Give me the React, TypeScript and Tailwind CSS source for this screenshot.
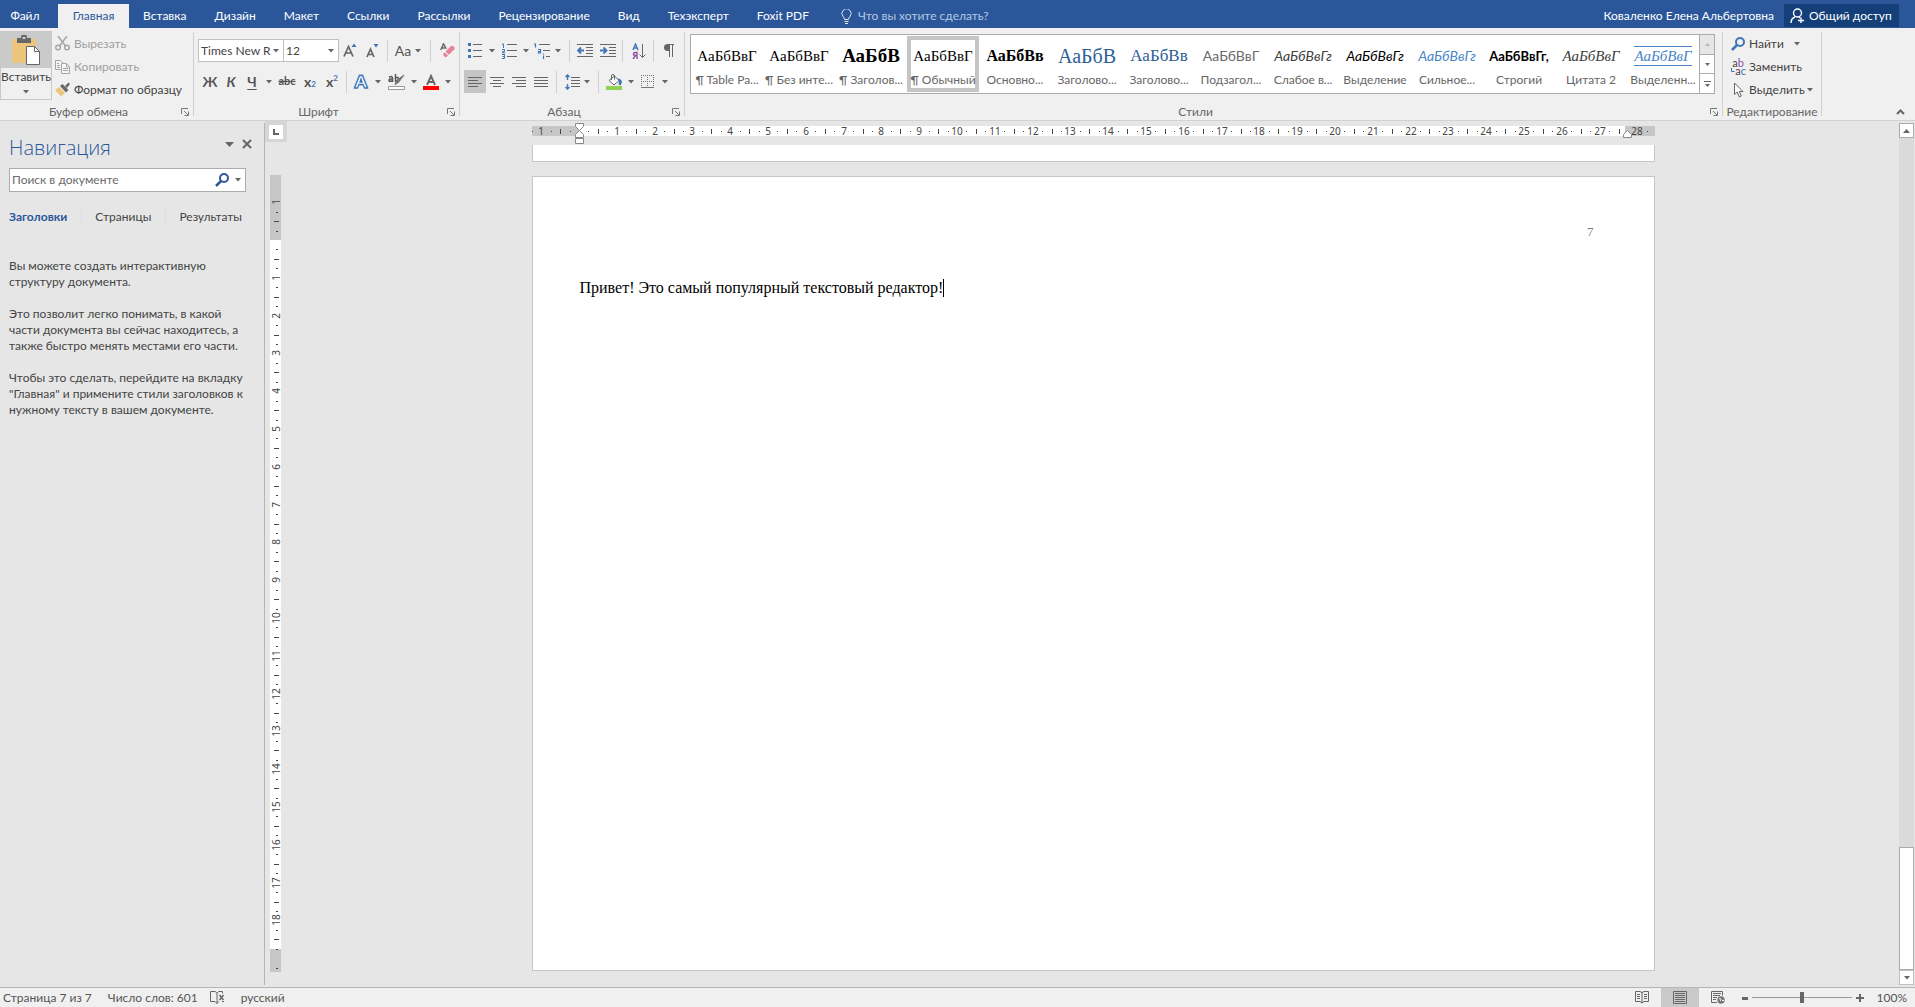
import { useState } from "react";
import type { ReactNode } from "react";
import clsx from "clsx";

const tabs = ["Вставка", "Дизайн", "Макет", "Ссылки", "Рассылки", "Рецензирование", "Вид", "Техэксперт", "Foxit PDF"];

const styles = [
    { preview: "АаБбВвГ", label: "¶ Table Pa...", look: "font-['Liberation_Serif',serif] text-[15px] text-black" },
    { preview: "АаБбВвГ", label: "¶ Без инте...", look: "font-['Liberation_Serif',serif] text-[15px] text-black" },
    { preview: "АаБбВ", label: "¶ Заголов...", look: "font-['Liberation_Serif',serif] text-[19px] font-bold text-black" },
    { preview: "АаБбВвГ", label: "¶ Обычный", look: "font-['Liberation_Serif',serif] text-[15px] text-black" },
    { preview: "АаБбВв", label: "Основно...", look: "font-['Liberation_Serif',serif] text-[16px] font-bold text-black" },
    { preview: "АаБбВ", label: "Заголово...", look: "font-['Liberation_Serif',serif] text-[20px] text-[#2e6096]" },
    { preview: "АаБбВв", label: "Заголово...", look: "font-['Liberation_Serif',serif] text-[17px] text-[#2e6096]" },
    { preview: "АаБбВвГ", label: "Подзагол...", look: "text-[14px] text-[#6a6a6a]" },
    { preview: "АаБбВвГг", label: "Слабое в...", look: "text-[14px] italic text-[#404040]" },
    { preview: "АаБбВвГг", label: "Выделение", look: "text-[14px] italic text-black" },
    { preview: "АаБбВвГг", label: "Сильное...", look: "text-[14px] italic text-[#4a86c8]" },
    { preview: "АаБбВвГг,", label: "Строгий", look: "text-[13px] font-bold text-black" },
    { preview: "АаБбВвГ", label: "Цитата 2", look: "font-['Liberation_Serif',serif] text-[15px] italic text-[#404040]" },
    { preview: "АаБбВвГ", label: "Выделенн...", look: "font-['Liberation_Serif',serif] text-[15px] italic text-[#4a86c8] border-y border-[#4a86c8]" },
];

const Arrow = () => (
    <svg className="shrink-0" width="6" height="4" viewBox="0 0 6 4">
        <path d="M0 0h6L3 3.500z" fill="#666" />
    </svg>
);

const Sep = ({ className = "mx-[2px]" }: { className?: string }) => (
    <span className={clsx("h-[22px] w-px shrink-0 bg-[#d0d0d0]", className)} />
);

const Tool = ({ label, className, children }: { label: string; className: string; children: ReactNode }) => (
    <button type="button" aria-label={label} className={clsx("flex h-[23px] shrink-0 items-center justify-center", className)}>
        {children}
    </button>
);

const Launcher = () => (
    <button type="button" aria-label="Параметры" className="absolute right-1 bottom-1">
        <svg width="8" height="8" viewBox="0 0 8 8" fill="none" stroke="#777">
            <path d="M.5 6V.5H7M3 3l4 4M7.500 3.500V7.500H3.500" />
        </svg>
    </button>
);

const Group = ({ title, launcher, children, className }: { title: string; launcher?: boolean; children: ReactNode; className?: string }) => (
    <>
        <section aria-label={title} className="relative flex shrink-0 flex-col pt-1">
            <div className={clsx("flex-1", className)}>{children}</div>
            <div className={clsx("text-center leading-4 text-[#666]", launcher && "pr-4")}>{title}</div>
            {launcher && <Launcher />}
        </section>
        <span className="my-1 w-px shrink-0 bg-[#d0d0d0]" />
    </>
);

const Lines = ({ rows }: { rows: [number, number][] }) => (
    <svg width="14" height="10" viewBox="0 0 14 10" stroke="#666">
        {rows.map(([from, to], i) => (
            <path key={i} d={`M${from} ${i * 3 + 0.5}H${to}`} />
        ))}
    </svg>
);

const Magnifier = ({ color, size }: { color: string; size: number }) => (
    <svg width={size} height={size} viewBox="0 0 14 14" fill="none" stroke={color} strokeWidth="2">
        <circle cx="9" cy="5" r="4" />
        <path d="M6 8L1 13" strokeWidth="2.500" />
    </svg>
);

const Clipboard = () => {
    return (
        <Group title="Буфер обмена" launcher className="flex">
            <button type="button" className="-mt-px flex h-[69px] w-[52px] flex-col border border-[#c8c8c8]">
                <span className="flex h-9 w-full items-center justify-center bg-[#cacaca]">
                    <svg width="30" height="30" viewBox="0 0 30 30">
                        <path d="M1 4h24v24H1z" fill="#ecc57c" />
                        <path d="M6 3h4V1.500Q10 0 11.500 0h3Q16 0 16 1.500V3h4v5H6z" fill="#666" />
                        <path d="M11.500 2h3v2h-3z" fill="#cacaca" />
                        <path d="M15.500 11.500h8l5 5v13h-13z" fill="#fff" stroke="#666" />
                        <path d="M23.500 11.500v5h5" fill="none" stroke="#666" />
                    </svg>
                </span>
                <span className="flex w-full flex-col items-center gap-1 text-[#444]">
                    <span className="leading-[18px]">Вставить</span>
                    <Arrow />
                </span>
            </button>
            <div className="flex w-[141px] flex-col pl-[3px]">
                <button type="button" className="flex h-[23px] items-center gap-1 text-[#a0a0a0]">
                    <svg width="15" height="15" viewBox="0 0 15 15" fill="none" stroke="#a6a6a6" strokeWidth="1.500">
                        <path d="M3 0l7.500 10M12 0L4.500 10" />
                        <circle cx="3" cy="11.500" r="2.300" />
                        <circle cx="12" cy="11.500" r="2.300" />
                    </svg>
                    Вырезать
                </button>
                <button type="button" className="flex h-[23px] items-center gap-1 text-[#a0a0a0]">
                    <svg width="15" height="14" viewBox="0 0 15 14" fill="#f4f4f4" stroke="#a6a6a6">
                        <path d="M.5 .5h5l3 3v6h-8z" />
                        <path d="M6.500 3.500h5l3 3v7h-8z" />
                        <path d="M2 3.500h2M2 5.500h3M2 7.500h3M8 8.500h5M8 10.500h5M11.500 4v3h3" />
                    </svg>
                    Копировать
                </button>
                <button type="button" className="flex h-[23px] items-center gap-1 text-[#444]">
                    <svg width="15" height="15" viewBox="0 0 15 15">
                        <path d="M0 8l4-3 6 6-4 3.500z" fill="#ecc57c" />
                        <path d="M5 4l2.500-2 6 6L11 10.500z" fill="#666" />
                        <path d="M10 4l3.500-3.500 1.500 1.500L12 6z" fill="#666" />
                    </svg>
                    Формат по образцу
                </button>
            </div>
        </Group>
    );
};

const Combo = ({ label, value, className }: { label: string; value: string; className: string }) => (
    <div className={clsx("relative h-[23px] shrink-0 border border-[#c0c0c0] bg-white", className)}>
        <select aria-label={label} className="block h-full w-full appearance-none overflow-hidden bg-white pr-3 pl-[2px] text-[#444] outline-none">
            <option>{value}</option>
        </select>
        <span className="pointer-events-none absolute top-1/2 right-1 -translate-y-1/2">
            <Arrow />
        </span>
    </div>
);

const FontGroup = () => (
    <Group title="Шрифт" launcher className="flex w-[265px] flex-col gap-2 pt-[7px] pl-1 text-[#555]">
        <div className="flex items-center">
            <Combo label="Шрифт" value="Times New R" className="w-[86px]" />
            <Combo label="Размер" value="12" className="-ml-px w-14" />
            <Tool label="Увеличить размер" className="w-[22px]">
                <svg width="14" height="15" viewBox="0 0 14 15">
                    <path d="M1 13.500L5.500 3.500L10 13.500M3 10h5.500" fill="none" stroke="#666" strokeWidth="1.700" />
                    <path d="M8.500 4l2.500-3.500L13.500 4z" fill="#3f74b5" />
                </svg>
            </Tool>
            <Tool label="Уменьшить размер" className="w-[22px]">
                <svg width="14" height="15" viewBox="0 0 14 15">
                    <path d="M2 14L5.500 6L9 14M3.500 11.500h4" fill="none" stroke="#666" strokeWidth="1.700" />
                    <path d="M8.500 1l2.500 3.500L13.500 1z" fill="#3f74b5" />
                </svg>
            </Tool>
            <Sep className="mr-[2px] ml-1" />
            <Tool label="Регистр" className="w-9 gap-1 text-[14px]">
                Aa <Arrow />
            </Tool>
            <Sep className="mx-1" />
            <Tool label="Очистить формат" className="w-6">
                <svg width="15" height="15" viewBox="0 0 15 15">
                    <path d="M.700 7L3.500 .7L6.300 6M1.800 5h3" fill="none" stroke="#666" strokeWidth="1.400" />
                    <path d="M5.500 8.500L11 3q1-.6 2 0l1.300 1.300q.6 1 0 2L8.800 11.800z" fill="#e8819a" />
                    <path d="M4.700 9.300l3.300 3.300-1.500 1.400H5L3.300 12.300v-1.600z" fill="#e8819a" />
                </svg>
            </Tool>
        </div>
        <div className="flex items-center text-[14px] font-bold">
            <Tool label="Полужирный" className="w-6">Ж</Tool>
            <Tool label="Курсив" className="w-[18px] italic">К</Tool>
            <Tool label="Подчеркнутый" className="w-6 underline underline-offset-2">Ч</Tool>
            <Tool label="Вид подчеркивания" className="w-[10px]"><Arrow /></Tool>
            <Tool label="Зачеркнутый" className="w-[26px] text-[11px] line-through">abc</Tool>
            <Tool label="Подстрочный" className="w-5">x<sub className="text-[8px] text-[#3f74b5]">2</sub></Tool>
            <Tool label="Надстрочный" className="w-6">x<sup className="text-[8px] text-[#3f74b5]">2</sup></Tool>
            <Sep />
            <Tool label="Текстовые эффекты" className="w-6">
                <svg width="16" height="16" viewBox="0 0 16 16" fill="none">
                    <path d="M2 14L7 2h2l5 12M5 10h6" stroke="#c5d9ef" strokeWidth="4" />
                    <path d="M1.500 14L6.500 1.500h3L14.500 14h-3L10 10.500H6L4.500 14zM7 8h2L8 5z" stroke="#3f74b5" strokeWidth="1.300" fill="#f6f9fd" />
                </svg>
            </Tool>
            <Tool label="Эффекты" className="w-[10px]"><Arrow /></Tool>
            <Tool label="Цвет выделения" className="w-[26px]">
                <svg width="17" height="17" viewBox="0 0 17 17">
                    <path d="M1 4.200Q4.500 2.700 4.500 5v4M4.500 5.800Q1 5.800 1 7.400T4.500 7.700M7.500 1v8M7.500 5q3-1.500 3 1t-3 2.300" fill="none" stroke="#555" strokeWidth="1.500" />
                    <path d="M16 2L10.500 9.500 7 11.500l1.500-4z" fill="#777" stroke="#777" />
                    <path d="M.5 13.500h16v3H.5z" fill="#fff" stroke="#999" />
                </svg>
            </Tool>
            <Tool label="Маркер" className="w-[10px]"><Arrow /></Tool>
            <Tool label="Цвет текста" className="w-6">
                <svg width="16" height="16" viewBox="0 0 16 16">
                    <path d="M4 11L8 2l4 9M5.500 8h5" fill="none" stroke="#666" strokeWidth="1.900" />
                    <path d="M0 12h16v4H0z" fill="#f00" />
                </svg>
            </Tool>
            <Tool label="Цвета" className="w-[10px]"><Arrow /></Tool>
        </div>
    </Group>
);

const ParagraphGroup = () => (
    <Group title="Абзац" launcher className="flex w-[224px] flex-col gap-2 pt-[7px] pl-1">
        <div className="flex items-center">
            <Tool label="Маркеры" className="w-[34px] gap-[7px]">
                <svg width="14" height="15" viewBox="0 0 14 15">
                    <path d="M0 0h3v3H0zM0 6h3v3H0zM0 12h3v3H0z" fill="#3f74b5" />
                    <path d="M5 1.500h9M5 7.500h9M5 13.500h9" stroke="#666" />
                </svg>
                <Arrow />
            </Tool>
            <Tool label="Нумерация" className="w-[34px] gap-[6px]">
                <svg width="15" height="16" viewBox="0 0 15 16">
                    <path d="M0 1h1.500V5M0 6.500h2.500v2H.500v1.500h2.500M0 11.500h2.500v4H0M.500 13.500h2" fill="none" stroke="#3f74b5" />
                    <path d="M5 1.500h10M5 7.500h10M5 13.500h10" stroke="#666" />
                </svg>
                <Arrow />
            </Tool>
            <Tool label="Многоуровневый список" className="w-[30px] gap-1">
                <svg width="17" height="16" viewBox="0 0 17 16">
                    <path d="M0 1h1.500V4.500M4 6.500h2.500v3.500h-2V8.500h2M9.500 10.500v1M9.500 12.500V16" fill="none" stroke="#3f74b5" strokeWidth="1.200" />
                    <path d="M5 1.500h11M9 7.500h7M12 13.500h4" stroke="#666" />
                </svg>
                <Arrow />
            </Tool>
            <Sep className="mr-[3px] ml-[7px]" />
            <Tool label="Уменьшить отступ" className="w-6">
                <svg width="16" height="13" viewBox="0 0 16 13">
                    <path d="M0 .5h16M9 3.500h7M9 6.500h7M9 9.500h7M0 12.500h16" stroke="#666" />
                    <path d="M7 6.500H1M4 3.500L1 6.500l3 3" fill="none" stroke="#3f74b5" strokeWidth="1.800" />
                </svg>
            </Tool>
            <Tool label="Увеличить отступ" className="w-[22px]">
                <svg width="16" height="13" viewBox="0 0 16 13">
                    <path d="M0 .5h16M9 3.500h7M9 6.500h7M9 9.500h7M0 12.500h16" stroke="#666" />
                    <path d="M0 6.500h6M3.500 3.500l3 3-3 3" fill="none" stroke="#3f74b5" strokeWidth="1.800" />
                </svg>
            </Tool>
            <Sep className="mr-[5px] ml-[3px]" />
            <Tool label="Сортировка" className="w-[22px]">
                <svg width="14" height="16" viewBox="0 0 14 16" fill="none">
                    <path d="M1 7L3.500 1L6 7M2 5h3" stroke="#3f74b5" strokeWidth="1.400" />
                    <path d="M5 16V9.500H3Q1.500 9.500 1.500 11t2 1.500H5M3.500 12.500L1 16" stroke="#8e4fa8" strokeWidth="1.400" />
                    <path d="M10.500 1v13M7.500 11.500l3 3 3-3" stroke="#666" />
                </svg>
            </Tool>
            <Sep className="mx-[3px]" />
            <Tool label="Знаки абзаца" className="w-6">
                <svg width="10" height="13" viewBox="0 0 10 13">
                    <path d="M10 .5H4M5.500 1v12M8.500 1v12" stroke="#666" />
                    <path d="M6 0H3.500a3.500 3.500 0 000 7H6z" fill="#666" />
                </svg>
            </Tool>
        </div>
        <div className="flex items-center">
            <Tool label="По левому краю" className="w-[22px] bg-[#c5c5c5]"><Lines rows={[[0, 14], [0, 10], [0, 14], [0, 10]]} /></Tool>
            <Tool label="По центру" className="w-[22px]"><Lines rows={[[0, 14], [3, 11], [0, 14], [3, 11]]} /></Tool>
            <Tool label="По правому краю" className="w-[22px]"><Lines rows={[[0, 14], [4, 14], [0, 14], [4, 14]]} /></Tool>
            <Tool label="По ширине" className="w-[22px]"><Lines rows={[[0, 14], [0, 14], [0, 14], [0, 14]]} /></Tool>
            <Sep className="mx-1" />
            <Tool label="Интервал" className="w-8 gap-1">
                <svg width="15" height="16" viewBox="0 0 15 16" fill="none">
                    <path d="M6 3.500h9M6 6.500h9M6 9.500h9M6 12.500h9" stroke="#666" />
                    <path d="M2.500 1v5M2.500 10v5M.500 3l2-2 2 2M.500 13l2 2 2-2" stroke="#3f74b5" strokeWidth="1.400" />
                </svg>
                <Arrow />
            </Tool>
            <Sep className="mx-[5px]" />
            <Tool label="Заливка" className="w-8 gap-[6px]">
                <svg width="16" height="16" viewBox="0 0 16 16">
                    <path d="M3 6.500l5.500-4.500 4.500 4.500L8 11z" fill="#fff" stroke="#666" />
                    <path d="M5.500 6V2q0-1.500 1.500-1.500T8.500 2v3.500" fill="none" stroke="#666" />
                    <path d="M11.500 4.500q4 0 4.500 3.500l-1.500 3.500-2-1q1-3-1-6z" fill="#3f74b5" />
                    <path d="M0 12h16v4H0z" fill="#92d050" />
                </svg>
                <Arrow />
            </Tool>
            <Tool label="Границы" className="w-9 gap-2">
                <svg width="13" height="13" viewBox="0 0 13 13" stroke="#777">
                    <path d="M0 .5h13M0 6.500h13M.5 0v13M6.500 0v13M12.500 0v13" strokeDasharray="1 1" />
                    <path d="M0 12.500h13" />
                </svg>
                <Arrow />
            </Tool>
        </div>
    </Group>
);

const StylesGroup = () => {
    const [selected, setSelected] = useState(3);

    return (
        <Group title="Стили" launcher className="pt-[2px] pr-[7px] pl-[5px]">
            <div className="flex h-15 border border-[#ababab] bg-white">
                {styles.map((style, i) => (
                    <button
                        key={i}
                        type="button"
                        onClick={() => setSelected(i)}
                        className={clsx(
                            "my-px flex w-18 flex-col items-center border-4",
                            selected === i ? "border-[#c5c5c5]" : "border-transparent"
                        )}
                    >
                        <span className="flex h-[33px] items-center">
                            <span className={clsx("leading-[18px] whitespace-nowrap", style.look)}>{style.preview}</span>
                        </span>
                        <span className="leading-4 whitespace-nowrap text-[#666]">{style.label}</span>
                    </button>
                ))}
                <div className="flex w-[15px] flex-col divide-y divide-[#ababab] border-l border-[#ababab]">
                    <button type="button" aria-label="Вверх" className="flex flex-1 items-center justify-center bg-[#e6e6e6]">
                        <svg width="5" height="3" viewBox="0 0 5 3"><path d="M0 3h5L2.500 0z" fill="#b5b5b5" /></svg>
                    </button>
                    <button type="button" aria-label="Вниз" className="flex flex-1 items-center justify-center">
                        <svg width="5" height="3" viewBox="0 0 5 3"><path d="M0 0h5L2.500 3z" fill="#666" /></svg>
                    </button>
                    <button type="button" aria-label="Все стили" className="flex flex-1 items-center justify-center">
                        <svg width="7" height="6" viewBox="0 0 7 6"><path d="M0 0h7v1H0zM1 3h5L3.500 6z" fill="#666" /></svg>
                    </button>
                </div>
            </div>
        </Group>
    );
};

const EditGroup = () => (
    <Group title="Редактирование" className="w-[98px] text-[#444]">
        <button type="button" className="flex h-[23px] items-center gap-1 pl-2">
            <Magnifier color="#3f74b5" size={14} />
            Найти
            <span className="ml-[6px]"><Arrow /></span>
        </button>
        <button type="button" className="flex h-[23px] items-center gap-[3px] pl-[7px]">
            <span className="flex w-4 flex-col text-[11px] leading-[8px]">
                <span>a<span className="text-[#8e4fa8]">b</span></span>
                <span className="flex items-center justify-end">
                    <svg width="4" height="5" viewBox="0 0 4 5"><path d="M.5 0v3.500h3" fill="none" stroke="#3f74b5" /></svg>
                    a<span className="text-[#3f74b5]">c</span>
                </span>
            </span>
            Заменить
        </button>
        <button type="button" className="flex h-[23px] items-center gap-[5px] pl-[11px]">
            <svg width="10" height="16" viewBox="0 0 10 16" fill="#fff" stroke="#666">
                <path d="M.5 1v11.500L3.300 10l2 5 2-1-2-4.500H9z" />
            </svg>
            <span className="flex items-center gap-[2px]">Выделить <Arrow /></span>
        </button>
    </Group>
);

const TopBar = () => (
    <header className="flex h-7 shrink-0 items-end bg-[#2b579a] text-white">
        <nav aria-label="Лента" className="flex h-6 items-stretch">
            <button type="button" className="w-[58px] pr-[9px] pl-[1px]">Файл</button>
            <button type="button" className="w-[71px] bg-[#f0f0f0] text-[#2b579a]">Главная</button>
            {tabs.map((tab) => (
                <button key={tab} type="button" className="px-[14px]">{tab}</button>
            ))}
        </nav>
        <label className="flex h-6 items-center gap-[6px] pl-[18px]">
            <svg width="11" height="15" viewBox="0 0 11 15" fill="none" stroke="#dbe4f1">
                <path d="M3.500 10.500Q3.500 9 2 7.500a4.600 4.600 0 117 0Q7.500 9 7.500 10.500zM3.500 12.500h4M4 14.500h3" />
            </svg>
            <input type="text" placeholder="Что вы хотите сделать?" className="w-40 bg-transparent outline-none placeholder:text-[#b5c7e3]" />
        </label>
        <div className="ml-auto flex h-6 items-center gap-[10px] pr-4">
            <span>Коваленко Елена Альбертовна</span>
            <button type="button" className="mb-px flex h-[23px] w-[115px] items-center gap-1 bg-[#143f78] pl-[6px] whitespace-nowrap">
                <svg className="shrink-0" width="15" height="16" viewBox="0 0 15 16" fill="none" stroke="#fff" strokeWidth="1.400">
                    <circle cx="7.500" cy="5" r="4" />
                    <path d="M1 15Q1 10.500 5 9M9 9l1 1M11 9.500v5.500M8 12.500h6" />
                </svg>
                Общий доступ
            </button>
        </div>
    </header>
);

const NavigationPane = () => (
    <aside className="my-[2px] flex w-[265px] shrink-0 flex-col border-r border-[#b5b5b5] pt-[9px] pl-[9px] text-[#444]">
        <div className="flex h-8 items-center justify-between pr-[12px]">
            <h2 className="font-['Open_Sans',sans-serif] text-[20px] font-light text-[#2b579a]">Навигация</h2>
            <div className="flex items-center gap-2 pb-2">
                <button type="button" aria-label="Меню">
                    <svg width="9" height="5" viewBox="0 0 9 5"><path d="M0 0h9L4.500 5z" fill="#666" /></svg>
                </button>
                <button type="button" aria-label="Закрыть">
                    <svg width="10" height="10" viewBox="0 0 10 10"><path d="M1 1l8 8M9 1L1 9" stroke="#666" strokeWidth="2" /></svg>
                </button>
            </div>
        </div>
        <div className="mt-1 flex h-6 w-[237px] items-center border border-[#ababab] bg-white pr-1">
            <input type="search" aria-label="Поиск в документе" placeholder="Поиск в документе" className="min-w-0 flex-1 pl-[2px] outline-none placeholder:text-[#6a6a6a]" />
            <Magnifier color="#2b579a" size={14} />
            <span className="ml-[6px]"><Arrow /></span>
        </div>
        <div className="mt-[14px] flex h-[22px] w-[237px] items-center justify-between">
            <button type="button" className="font-bold text-[#2b579a]">Заголовки</button>
            <span className="h-5 w-px bg-[#dedede]" />
            <button type="button">Страницы</button>
            <span className="h-5 w-px bg-[#dedede]" />
            <button type="button" className="pr-1">Результаты</button>
        </div>
        <div className="mt-[30px] flex flex-col gap-4 leading-4 whitespace-nowrap">
            <p>Вы можете создать интерактивную<br />структуру документа.</p>
            <p>Это позволит легко понимать, в какой<br />части документа вы сейчас находитесь, а<br />также быстро менять местами его части.</p>
            <p>Чтобы это сделать, перейдите на вкладку<br />"Главная" и примените стили заголовков к<br />нужному тексту в вашем документе.</p>
        </div>
    </aside>
);

// One centimetre at 96 dpi
const CM = 37.8;

const HorizontalRuler = () => {
    const zero = 47;
    const quarters = Array.from({ length: 119 }, (_, i) => i - 5);

    return (
        <svg className="block shrink-0 font-['Noto_Sans',sans-serif]" width="1123" height="22" viewBox="0 0 1123 22" fontSize="10" fill="#444">
            <path d="M0 3h1123v10H0z" fill="#c6c6c6" />
            <path d={`M${zero} 3h1046v10H${zero}z`} fill="#fff" />
            {quarters.map((q) => {
                const x = Math.round(zero + (q * CM) / 4);
                if (q === 0) return null;
                if (q % 4 === 0) return <text key={q} x={x} y="12" textAnchor="middle">{Math.abs(q / 4)}</text>;
                return q % 2 === 0
                    ? <path key={q} d={`M${x} 6h1v5h-1z`} />
                    : <path key={q} d={`M${x} 8h1v1h-1z`} />;
            })}
            <g fill="#fff" stroke="#888">
                <path d="M43.500 .5h8v3l-4 4-4-4zM43.500 14.500v-3l4-4 4 4v3zM43.500 15.500h8v5h-8z" />
                <path d="M1091.500 14.500v-3l4-4 4 4v3z" />
            </g>
        </svg>
    );
};

const VerticalRuler = () => {
    const zero = 65;
    const quarters = Array.from({ length: 84 }, (_, i) => i - 6).filter((q) => q >= -4 && q !== 76 && q < 78);

    return (
        <svg className="mt-[33px] ml-[5px] block overflow-visible font-['Noto_Sans',sans-serif]" width="11" height="797" viewBox="0 0 11 797" fontSize="10" fill="#444">
            <path d="M0 0h11v797H0z" fill="#c6c6c6" />
            <path d="M0 65h11v709H0z" fill="#fff" />
            {quarters.map((q) => {
                const y = Math.round(zero + (q * CM) / 4);
                if (q === 0) return null;
                if (q % 4 === 0) return <text key={q} transform={`translate(10 ${y}) rotate(-90)`} textAnchor="middle">{Math.abs(q / 4)}</text>;
                return q % 2 === 0
                    ? <path key={q} d={`M4 ${y}h5v1H4z`} />
                    : <path key={q} d={`M6 ${y}h2v1H6z`} />;
            })}
        </svg>
    );
};

const DocumentArea = () => (
    <main className="flex min-w-0 flex-1">
        <div className="flex w-[22px] shrink-0 flex-col items-start">
            <button type="button" aria-label="Табуляция" className="flex h-[21px] w-[22px] shrink-0 items-center justify-center bg-[#d6d6d6]">
                <span className="flex h-[14px] w-[14px] items-center justify-center bg-white">
                    <svg width="6" height="6" viewBox="0 0 6 6"><path d="M1 0v5h5" fill="none" stroke="#666" strokeWidth="2" /></svg>
                </span>
            </button>
            <VerticalRuler />
        </div>
        <div className="flex min-w-0 flex-1 flex-col items-center overflow-hidden pt-[2px]">
            <HorizontalRuler />
            <div className="h-[17px] w-full max-w-[1123px] shrink-0 border-x border-b border-[#c6c6c6] bg-white" />
            <article className="mt-[14px] mb-4 w-full max-w-[1123px] flex-1 border border-[#c6c6c6] bg-white pr-15 pl-[47px] font-['Liberation_Serif',serif]">
                <p className="mt-[46px] text-right text-[13px] leading-[18px] text-[#808080]">7</p>
                <p className="mt-[37px] flex items-center text-[16px] leading-[20px] text-black">
                    Привет! Это самый популярный текстовый редактор!
                    <span className="h-[18px] w-px bg-black" />
                </p>
            </article>
        </div>
        <div className="my-[2px] mr-px flex w-[15px] shrink-0 flex-col bg-[#dadada]">
            <button type="button" aria-label="Прокрутить вверх" className="flex h-[15px] items-center justify-center border border-[#ababab] bg-white">
                <svg width="7" height="4" viewBox="0 0 7 4"><path d="M0 4h7L3.500 0z" fill="#666" /></svg>
            </button>
            <div className="mt-auto h-[123px] border border-[#ababab] bg-white" />
            <button type="button" aria-label="Прокрутить вниз" className="flex h-[15px] items-center justify-center border border-[#c0c0c0] bg-white">
                <Arrow />
            </button>
        </div>
    </main>
);

const StatusBar = () => {
    const [zoom, setZoom] = useState(50);

    return (
        <footer className="flex h-5 shrink-0 items-center border-t border-[#b5b5b5] bg-[#f0f0f0] pr-2 pl-[3px] text-[#555]">
            <span>Страница 7 из 7</span>
            <span className="ml-4">Число слов: 601</span>
            <button type="button" aria-label="Проверка правописания" className="ml-3">
                <svg width="15" height="13" viewBox="0 0 15 13" fill="none" stroke="#666">
                    <path d="M7 12.500V2.500L5.500.5H.5v10H5l2 2 1.500-2M7 2.500L8.500.5h4v2M12 10.500h2" />
                    <path d="M9.500 4l4 5M13.500 4l-4 5" strokeWidth="1.500" />
                </svg>
            </button>
            <span className="ml-4">русский</span>
            <div className="ml-auto flex h-full items-center">
                <button type="button" aria-label="Режим чтения" className="mr-3">
                    <svg width="14" height="13" viewBox="0 0 14 13" fill="none" stroke="#666">
                        <path d="M.5 .5H5l2 1 2-1h4.500v10H9l-2 1.500-2-1.500H.5zM7 1v11M2 3.500h3M2 5.500h3M2 7.500h3M9 3.500h3M9 5.500h3M9 7.500h3" />
                    </svg>
                </button>
                <button type="button" aria-label="Разметка страницы" className="flex h-full w-[38px] items-center justify-center bg-[#c9c9c9]">
                    <svg width="14" height="13" viewBox="0 0 14 13" fill="none" stroke="#666">
                        <path d="M.5 .5h13v12H.5zM2 2.500h10M2 4.500h10M2 6.500h10M2 8.500h10M2 10.500h10" />
                    </svg>
                </button>
                <button type="button" aria-label="Веб-документ" className="mr-[17px] ml-3">
                    <svg width="14" height="13" viewBox="0 0 14 13" fill="none" stroke="#666">
                        <path d="M6 11.500H.5V.5h11v4M2 2.500h8M2 4.500h7M2 6.500h4M2 8.500h3" />
                        <circle cx="10" cy="9" r="3.700" fill="#777" stroke="none" />
                        <path d="M8 8q1.500-1 2 0t-1 2M11 9.500h2" stroke="#f0f0f0" />
                    </svg>
                </button>
                <button type="button" aria-label="Уменьшить масштаб">
                    <svg width="6" height="8" viewBox="0 0 6 8"><path d="M0 3h6v3H0z" fill="#666" /></svg>
                </button>
                <input
                    type="range"
                    aria-label="Масштаб"
                    value={zoom}
                    onChange={(e) => setZoom(Number(e.target.value))}
                    className="mx-1 h-[11px] w-[100px] appearance-none bg-transparent [&::-webkit-slider-runnable-track]:h-px [&::-webkit-slider-runnable-track]:bg-[#999] [&::-webkit-slider-thumb]:-mt-[5px] [&::-webkit-slider-thumb]:h-[11px] [&::-webkit-slider-thumb]:w-1 [&::-webkit-slider-thumb]:appearance-none [&::-webkit-slider-thumb]:bg-[#666]"
                />
                <button type="button" aria-label="Увеличить масштаб">
                    <svg width="8" height="8" viewBox="0 0 8 8"><path d="M0 4h8M4 0v8" stroke="#666" strokeWidth="2" /></svg>
                </button>
                <span className="w-[43px] text-right">100%</span>
            </div>
        </footer>
    );
};

const App = () => {
    return (
        <div className="flex h-screen flex-col overflow-hidden bg-[#e6e6e6] font-['Lato',sans-serif] text-[12px]">
            <TopBar />
            {/* Ribbon */}
            <div className="flex h-[93px] shrink-0 border-b border-[#d2d2d2] bg-[#f0f0f0]">
                <Clipboard />
                <FontGroup />
                <ParagraphGroup />
                <StylesGroup />
                <EditGroup />
                <button type="button" aria-label="Свернуть ленту" className="mt-auto mr-[10px] mb-[5px] ml-auto">
                    <svg width="9" height="6" viewBox="0 0 9 6"><path d="M1 5l3.500-3.500L8 5" fill="none" stroke="#666" strokeWidth="2" /></svg>
                </button>
            </div>
            <div className="flex min-h-0 flex-1">
                <NavigationPane />
                <DocumentArea />
            </div>
            <StatusBar />
        </div>
    );
};

export default App;
